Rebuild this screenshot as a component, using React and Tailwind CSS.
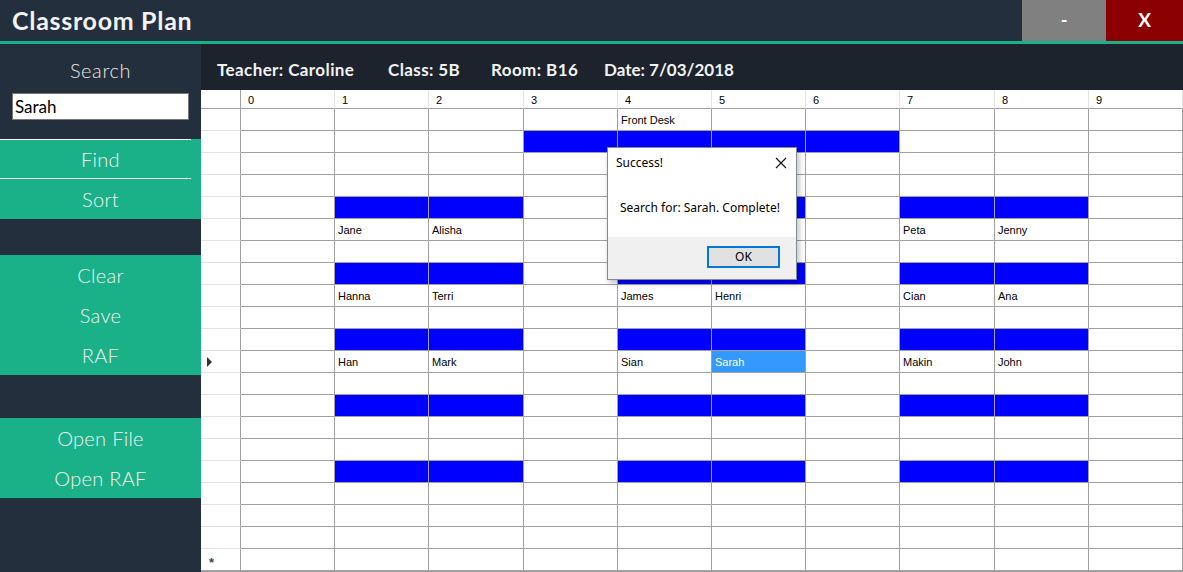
const BLUE = "b";

function emptyRow() {
  return ["", "", "", "", "", "", "", "", "", ""];
}

function deskRow(names) {
  const r = emptyRow();
  [1, 2, 4, 5, 7, 8].forEach((c, i) => {
    r[c] = names ? names[i] : BLUE;
  });
  return r;
}

const front = emptyRow();
front[4] = "Front Desk";
const board = emptyRow();
[3, 4, 5, 6].forEach((c) => (board[c] = BLUE));
const row5 = emptyRow();
row5[1] = "Jane";
row5[2] = "Alisha";
row5[7] = "Peta";
row5[8] = "Jenny";

const rows = [
  front,
  board,
  emptyRow(),
  emptyRow(),
  deskRow(),
  row5,
  emptyRow(),
  deskRow(),
  deskRow(["Hanna", "Terri", "James", "Henri", "Cian", "Ana"]),
  emptyRow(),
  deskRow(),
  deskRow(["Han", "Mark", "Sian", "Sarah", "Makin", "John"]),
  emptyRow(),
  deskRow(),
  emptyRow(),
  emptyRow(),
  deskRow(),
  emptyRow(),
  emptyRow(),
  emptyRow(),
];

const SELECTED_ROW = 11;
const SELECTED_COL = 5;

function SideButton({ label, lines }) {
  return (
    <div className="flex h-[40px] flex-col bg-[#1ab188]">
      {lines ? <div className="h-px w-[191px] bg-white" /> : null}
      <div className="flex flex-1 items-center justify-center text-[20px] font-light tracking-[0.3px] text-[#f3f3f3]">
        {label}
      </div>
      {lines ? <div className="h-px w-[191px] bg-white" /> : null}
    </div>
  );
}

function RowArrow() {
  return (
    <svg viewBox="0 0 6 10" className="h-[10px] w-[6px]" aria-hidden="true">
      <path d="M0 0L5 5L0 10Z" fill="#333" />
    </svg>
  );
}

function MessageBox() {
  return (
    <div className="absolute left-[607px] top-[147px] flex h-[133px] w-[190px] flex-col border border-[#7f8b99] bg-white shadow-[2px_3px_6px_rgba(0,0,0,0.25)] font-['Noto_Sans',sans-serif] text-[12px] text-black">
      <div className="flex h-[30px] items-center justify-between pl-[8px] pr-[9px]">
        <span>Success!</span>
        <svg viewBox="0 0 12 12" className="h-[12px] w-[12px]" aria-hidden="true">
          <path d="M1 1L11 11M11 1L1 11" stroke="#111" strokeWidth="1.1" />
        </svg>
      </div>
      <div className="flex h-[59px] items-center pl-[12px]">Search for: Sarah. Complete!</div>
      <div className="flex flex-1 items-start justify-end bg-[#f0f0f0] pr-[16px] pt-[9px]">
        <div className="flex h-[22px] w-[73px] items-center justify-center border-2 border-[#0078d7] bg-[#e1e1e1]">OK</div>
      </div>
    </div>
  );
}

function Grid() {
  return (
    <div className="grid grid-cols-[40px_94px_94px_95px_94px_94px_94px_94px_95px_94px_94px] bg-white font-['Liberation_Sans',sans-serif] text-[11px] text-black">
      <div className="h-[19px] border-b border-r border-[#a0a0a0]" />
      {Array.from({ length: 10 }, (_, i) => (
        <div key={i} className="h-[19px] border-b border-r border-b-[#a0a0a0] border-r-[#e3e3e3] pl-[7px] pt-[2px]">
          {i}
        </div>
      ))}
      {rows.map((row, r) => (
        <div key={r} className="contents">
          <div className="flex h-[22px] items-center border-b border-r border-b-[#e3e3e3] border-r-[#a0a0a0] pl-[6px]">
            {r === SELECTED_ROW ? <RowArrow /> : null}
          </div>
          {row.map((cell, c) => {
            const selected = r === SELECTED_ROW && c === SELECTED_COL;
            let cls = "flex h-[22px] items-center border-b border-r border-[#a0a0a0] pl-[3px] pt-px";
            if (cell === BLUE) cls += " bg-[#0000ff]";
            if (selected) cls += " bg-[#3399ff] text-white";
            return (
              <div key={c} className={cls}>
                {cell === BLUE ? "" : cell}
              </div>
            );
          })}
        </div>
      ))}
      <div className="flex h-[22px] items-start border-b border-r border-b-[#a0a0a0] border-r-[#a0a0a0] pl-[8px] pt-[7px] text-[13px] font-bold leading-none text-[#444]">
        *
      </div>
      {Array.from({ length: 10 }, (_, i) => (
        <div key={i} className="h-[22px] border-b border-r border-[#a0a0a0]" />
      ))}
    </div>
  );
}

export default function App() {
  return (
    <div className="relative flex h-[572px] w-[1183px] flex-col overflow-hidden bg-[#a0a0a0] font-['Lato',sans-serif]">
      <div className="flex h-[41px] bg-[#232f3c]">
        <div className="flex flex-1 items-center pl-[12px] text-[25px] font-bold tracking-[0.7px] text-[#f2f2f2]">
          Classroom Plan
        </div>
        <div className="flex w-[84px] items-center justify-center bg-[#808080] text-[18px] font-bold text-white">-</div>
        <div className="flex w-[77px] items-center justify-center bg-[#8b0000] text-[19px] font-bold text-white">X</div>
      </div>
      <div className="h-[3px] bg-[#1ab188]" />
      <div className="flex flex-1">
        <div className="flex w-[201px] flex-col bg-[#232f3c]">
          <div className="flex h-[49px] items-center justify-center pt-[2px] text-[20px] font-light tracking-[0.6px] text-[#e8e8e8]">
            Search
          </div>
          <div className="mx-[12px] flex h-[27px] items-center border border-[#777] bg-white pl-[2px] text-[17px] text-black">
            Sarah
          </div>
          <div className="h-[19px]" />
          <SideButton label="Find" lines />
          <SideButton label="Sort" />
          <div className="h-[36px]" />
          <SideButton label="Clear" />
          <SideButton label="Save" />
          <SideButton label="RAF" />
          <div className="h-[43px]" />
          <SideButton label="Open File" />
          <SideButton label="Open RAF" />
        </div>
        <div className="flex flex-1 flex-col">
          <div className="flex h-[46px] items-center bg-[#1c232c] pl-[16px] pt-[6px] text-[17px] font-bold tracking-[0.4px] text-[#f2f2f2]">
            <span className="w-[171px]">Teacher: Caroline</span>
            <span className="w-[103px]">Class: 5B</span>
            <span className="w-[113px]">Room: B16</span>
            <span className="tracking-[0px]">Date: 7/03/2018</span>
          </div>
          <Grid />
        </div>
      </div>
      <MessageBox />
    </div>
  );
}
